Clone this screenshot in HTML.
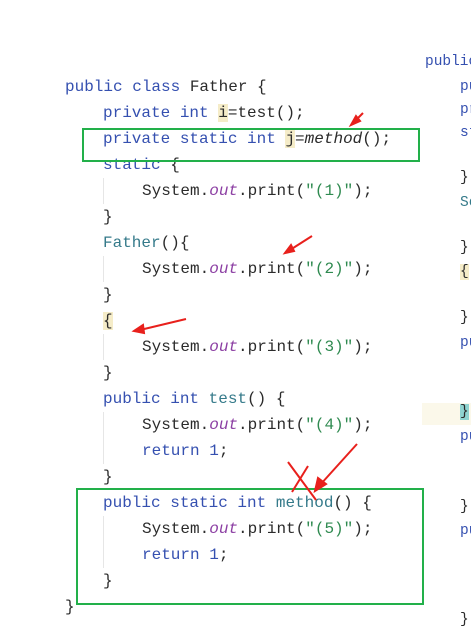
<!DOCTYPE html><html><head><style>
body{margin:0;width:471px;height:635px;background:#fff;position:relative;overflow:hidden;font-family:"Liberation Mono",monospace;}
.l{position:absolute;font-size:16px;line-height:26px;height:26px;white-space:pre;color:#2b2b2b;}
.k{color:#3550b0}.o{color:#8c3fa3;font-style:italic}.s{color:#2f8a50}.m{color:#357a8a}.h{background:#f5ecc8}
.r{position:absolute;font-size:14.5px;line-height:23px;white-space:pre;color:#2b2b2b;left:425px}
.g{position:absolute;border:2px solid #22b04a}
.gl{position:absolute;width:1px;background:#e6e6e6}
</style></head><body>
<div class="l" style="left:65px;top:74px"><span class="k">public class</span> Father {</div>
<div class="l" style="left:103px;top:100px"><span class="k">private int</span> <span class="h">i</span>=test();</div>
<div class="l" style="left:103px;top:126px"><span class="k">private static int</span> <span class="h">j</span>=<i>method</i>();</div>
<div class="l" style="left:103px;top:152px"><span class="k">static</span> {</div>
<div class="l" style="left:142px;top:178px">System.<span class="o">out</span>.print(<span class="s">"(1)"</span>);</div>
<div class="l" style="left:103px;top:204px">}</div>
<div class="l" style="left:103px;top:230px"><span class="m">Father</span>(){</div>
<div class="l" style="left:142px;top:256px">System.<span class="o">out</span>.print(<span class="s">"(2)"</span>);</div>
<div class="l" style="left:103px;top:282px">}</div>
<div class="l" style="left:103px;top:308px"><span class="h">{</span></div>
<div class="l" style="left:142px;top:334px">System.<span class="o">out</span>.print(<span class="s">"(3)"</span>);</div>
<div class="l" style="left:103px;top:360px">}</div>
<div class="l" style="left:103px;top:386px"><span class="k">public int</span> <span class="m">test</span>() {</div>
<div class="l" style="left:142px;top:412px">System.<span class="o">out</span>.print(<span class="s">"(4)"</span>);</div>
<div class="l" style="left:142px;top:438px"><span class="k">return</span> <span class="k">1</span>;</div>
<div class="l" style="left:103px;top:464px">}</div>
<div class="l" style="left:103px;top:490px"><span class="k">public static int</span> <span class="m">method</span>() {</div>
<div class="l" style="left:142px;top:516px">System.<span class="o">out</span>.print(<span class="s">"(5)"</span>);</div>
<div class="l" style="left:142px;top:542px"><span class="k">return</span> <span class="k">1</span>;</div>
<div class="l" style="left:103px;top:568px">}</div>
<div class="l" style="left:65px;top:594px">}</div>
<div class="gl" style="left:103px;top:178px;height:26px"></div>
<div class="gl" style="left:103px;top:256px;height:26px"></div>
<div class="gl" style="left:103px;top:334px;height:26px"></div>
<div class="gl" style="left:103px;top:412px;height:52px"></div>
<div class="gl" style="left:103px;top:516px;height:52px"></div>
<div style="position:absolute;left:422px;top:403px;width:49px;height:22px;background:#fbf8ea"></div>
<div class="r" style="top:51px"><span class="k">public</span></div>
<div class="r" style="top:76px;left:460px"><span class="k">pu</span></div>
<div class="r" style="top:99px;left:460px"><span class="k">pr</span></div>
<div class="r" style="top:122px;left:460px"><span class="k">st</span></div>
<div class="r" style="top:167px;left:460px">}</div>
<div class="r" style="top:192px;left:460px"><span class="m">Se</span></div>
<div class="r" style="top:237px;left:460px">}</div>
<div class="r" style="top:261px;left:460px"><span class="h">{</span></div>
<div class="r" style="top:307px;left:460px">}</div>
<div class="r" style="top:332px;left:460px"><span class="k">pu</span></div>
<div class="r" style="top:401px;left:460px"><span style="background:#8fd3d0">}</span></div>
<div class="r" style="top:426px;left:460px"><span class="k">pu</span></div>
<div class="r" style="top:496px;left:460px">}</div>
<div class="r" style="top:520px;left:460px"><span class="k">pu</span></div>
<div class="r" style="top:609px;left:460px">}</div>
<div class="g" style="left:82px;top:128px;width:334px;height:30px"></div>
<div class="g" style="left:76px;top:488px;width:344px;height:113px"></div>
<svg style="position:absolute;left:0;top:0" width="471" height="635">
<g stroke="#e8201c" stroke-width="2" fill="#e8201c">
<line x1="363" y1="113" x2="354" y2="122"/><polygon points="351,125 356,116 360,121"/>
<line x1="312" y1="236" x2="290" y2="250"/><polygon points="285,253 291,245 294,251"/>
<line x1="186" y1="319" x2="140" y2="330"/><polygon points="134,331 143,325 144,333"/>
<line x1="357" y1="444" x2="320" y2="485"/><polygon points="315,491 318,478 326,484"/>
<line x1="288" y1="462" x2="316" y2="500" fill="none"/><line x1="308" y1="466" x2="292" y2="492" fill="none"/>
</g></svg>
</body></html>
